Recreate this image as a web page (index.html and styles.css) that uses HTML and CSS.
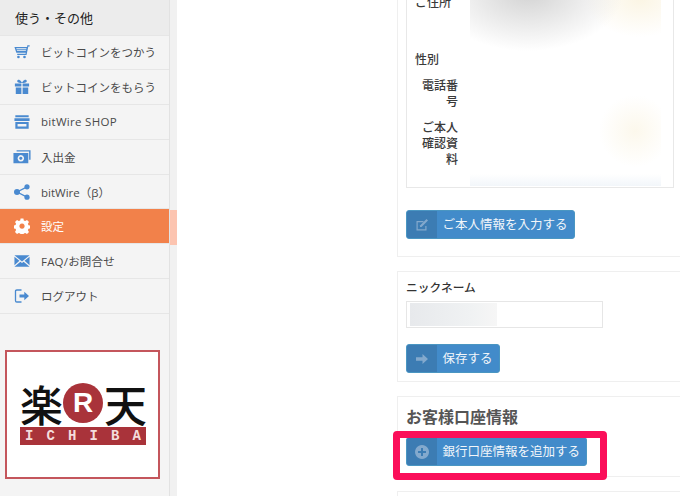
FILE: index.html
```html
<!DOCTYPE html>
<html lang="ja">
<head>
<meta charset="utf-8">
<title>設定</title>
<link rel="stylesheet" href="styles.css">
</head>
<body>
<div class="page">
  <aside class="sidebar">
    <div class="side-head">使う・その他</div>
    <nav class="nav">
      <a class="nav-item"><svg class="ico" viewBox="0 0 18 16"><path d="M15 0.500h2.600v1.400h-1.500l-2 9.400H3.600v-1.300h9.400l.2-1.100H2.600L0.500 2.500h14.200zM2.600 3.800l.2 1h11l.2-1zM3.200 5.900l.2 1h9.900l.2-1z" fill-rule="evenodd"/><circle cx="5" cy="13.600" r="1.500"/><circle cx="11.800" cy="13.600" r="1.500"/></svg><span>ビットコインをつかう</span></a>
      <a class="nav-item"><svg class="ico" viewBox="0 0 18 18"><path d="M1 5h7.300v3.400H1zM9.700 5H17v3.400H9.700zM2 9.600h6.300V17H2zM9.700 9.600H16V17H9.700z"/><path d="M9 4.600C7 4.600 4 4.400 3.600 2.800 3.300 1.200 5 .6 6.200 1.100 7.600 1.700 8.400 3 9 4.200 9.600 3 10.400 1.700 11.800 1.100 13 .6 14.700 1.200 14.400 2.800 14 4.400 11 4.600 9 4.600z"/></svg><span>ビットコインをもらう</span></a>
      <a class="nav-item nav-latin"><svg class="ico" viewBox="0 0 18 16"><path d="M1.500 0.500h15v2.200h-15zM0.500 3.800h17v3.200h-17zM1.500 8h15v7.500h-15zM4 10.200v3h10v-3z" fill-rule="evenodd"/></svg><span>bitWire SHOP</span></a>
      <a class="nav-item"><svg class="ico ico-wide" viewBox="0 0 20 16"><path d="M4 0.500h15.500v10.500h-1.600V2H4z"/><path d="M0.500 3.500h16.500v11.500H0.500zM8.700 5.800a3.600 3.600 0 1 0 .01 0zM8.700 7.600a1.800 1.800 0 1 1-.01 0z" fill-rule="evenodd"/></svg><span>入出金</span></a>
      <a class="nav-item"><svg class="ico" viewBox="0 0 16 16"><circle cx="3" cy="8" r="3"/><circle cx="13" cy="2.800" r="2.600"/><circle cx="13" cy="13.200" r="2.600"/><path d="M3 8 13 2.800M3 8l10 5.200" stroke="#4a8ad0" stroke-width="1.400" fill="none"/></svg><span>bitWire（β）</span></a>
      <a class="nav-item nav-active"><svg class="ico" viewBox="0 0 16 16"><path d="M6.600 0.500h2.800l.4 2 1.400.6 1.800-1.100 2 2-1.100 1.800.6 1.400 2 .4v2.800l-2 .4-.6 1.400 1.100 1.800-2 2-1.800-1.100-1.400.6-.4 2H6.600l-.4-2-1.400-.6L3 15.900l-2-2 1.100-1.800-.6-1.400-2-.4V7.500l2-.4.6-1.400L1 3.900l2-2 1.800 1.100 1.400-.6zM8 5.500a2.600 2.600 0 1 0 .01 0z" fill-rule="evenodd"/></svg><span>設定</span></a>
      <a class="nav-item nav-latin-s"><svg class="ico" viewBox="0 0 18 14"><path d="M0.500 0.500h17l-8.500 7zM0.500 2.200v9.600l5.600-5zM17.500 2.200v9.600l-5.600-5zM0.500 13.500l6.700-5.700L9 9.300l1.800-1.500 6.700 5.700z"/></svg><span>FAQ/お問合せ</span></a>
      <a class="nav-item"><svg class="ico" viewBox="0 0 16 16"><path d="M7.500 2H2.800C2 2 1.500 2.500 1.500 3.200v9.600c0 .7.5 1.200 1.300 1.200h4.700" fill="none" stroke="#4a8ad0" stroke-width="1.300"/><path d="M5.500 6.500h4.800V3.800L15 8l-4.700 4.200V9.500H5.500z"/></svg><span>ログアウト</span></a>
    </nav>
    <div class="ad">
      <div class="ad-mark"><span class="ad-kanji">楽</span><span class="ad-r">R</span><span class="ad-kanji">天</span></div>
      <div class="ad-band"><span>I</span><span>C</span><span>H</span><span>I</span><span>B</span><span>A</span></div>
    </div>
  </aside>
  <div class="rail"><div class="rail-mark"></div></div>
  <main class="main">
    <section class="panel panel-first">
      <div class="profile">
        <div class="labels">
          <div class="lab lab-addr lab-left">ご住所</div>
          <div class="lab lab-left">性別</div>
          <div class="lab">電話番<br>号</div>
          <div class="lab">ご本人<br>確認資<br>料</div>
        </div>
        <div class="blur"></div>
      </div>
      <button class="btn btn-profile"><span class="btn-ico"><svg viewBox="0 0 14 14"><path d="M1.500 3h7v1.200H2.700v7.100h7.600V8h1.200v4.500h-10z"/><path d="M5 7.500 11.500 1l1.500 1.500L6.500 9H5z"/></svg></span><span class="btn-txt">ご本人情報を入力する</span></button>
    </section>
    <section class="panel panel-nick">
      <div class="nick-label">ニックネーム</div>
      <div class="nick-input"><div class="nick-blur"></div></div>
      <button class="btn"><span class="btn-ico"><svg viewBox="0 0 14 14"><path d="M1 5.300h6.500V2L13 7l-5.500 5V8.700H1z"/></svg></span><span class="btn-txt">保存する</span></button>
    </section>
    <section class="panel panel-bank">
      <h2 class="bank-title">お客様口座情報</h2>
      <button class="btn"><span class="btn-ico"><svg viewBox="0 0 14 14"><path fill-rule="evenodd" d="M7 0a7 7 0 1 0 .01 0zM6 3h2v3h3v2H8v3H6V8H3V6h3z"/></svg></span><span class="btn-txt">銀行口座情報を追加する</span></button>
      <div class="highlight"></div>
    </section>
    <section class="panel panel-next"></section>
  </main>
</div>
</body>
</html>
```

FILE: styles.css
```css
* { box-sizing: border-box; }
html, body { margin: 0; height: 496px; overflow: hidden; background: #fff; }
body { font-family: "Open Sans", "Noto Sans CJK JP", sans-serif; color: #444; }
.page { display: flex; height: 496px; overflow: hidden; }

.sidebar { width: 169px; flex: none; background: #f4f4f4; }
.side-head { height: 35.5px; background: #ececec; border-bottom: 1px solid #e6e6e6; padding: 10px 0 0 15px; font-size: 13px; line-height: 17px; color: #222; }
.nav-item { height: 34.8px; display: flex; align-items: center; padding-left: 14px; border-bottom: 1.5px solid #e6e6e6; font-size: 11.5px; color: #4a4a4a; }
.nav-item span { margin-left: 11px; }
.nav-latin { letter-spacing: 0.3px; }
.nav-latin-s { letter-spacing: 0.2px; }
.ico { width: 16px; height: 16px; flex: none; fill: #4a8ad0; }
.ico-wide { margin-left: -1px; width: 18px; margin-right: -1px; }
.nav-active { background: #f2814a; color: #fff; }
.nav-active .ico { fill: #fff; }

.ad { width: 155px; height: 129px; margin: 36px 0 0 5px; background: #fff; border: 2px solid #c4565c; padding: 29px 0 0 13px; }
.ad-mark { display: flex; align-items: center; width: 126px; height: 44px; justify-content: space-between; }
.ad-kanji { width: 42px; font: 500 43px/44px "Noto Sans CJK JP", sans-serif; color: #111; }
.ad-r { width: 40px; height: 40px; flex: none; border-radius: 50%; background: #a9333a; color: #fff; font: 700 28px/40px "Liberation Sans", sans-serif; text-align: center; }
.ad-band { width: 126px; height: 18px; margin-top: 2px; background: #a9333a; color: #f4dcdc; display: flex; justify-content: space-between; padding: 0 5px; font: 700 14px/18px "Liberation Mono", monospace; }

.rail { width: 8px; flex: none; background: #f1f1f1; border-left: 1.5px solid #e2e2e2; position: relative; }
.rail-mark { position: absolute; left: 0; top: 210px; width: 7px; height: 35px; background: #fcc4b0; }

.main { flex: 1; min-width: 0; padding-left: 220px; }
.panel { width: 300px; border: 1.5px solid #efefef; padding: 0 0 0 8px; position: relative; }
.panel-first { margin-top: -20px; height: 277px; border-top: 0; }
.profile { display: flex; width: 268px; height: 208px; border: 1.5px solid #e8e8e8; background: #fff; }
.labels { width: 43px; margin-left: 8px; flex: none; padding-top: 13.5px; }
.lab { font-size: 12px; line-height: 16px; text-align: right; margin-bottom: 10px; color: #3a3a3a; font-weight: 500; }
.lab-left { text-align: left; }
.lab-addr { margin-bottom: 41px; }
.blur { width: 191px; margin: 0 0 0 12px; height: 205px; background:
  radial-gradient(ellipse 95px 58px at 58px 12px, #d3d3d3, rgba(211,211,211,0) 100%),
  radial-gradient(ellipse 55px 38px at 170px 18px, #fbf5e4, rgba(251,245,228,0) 100%),
  radial-gradient(ellipse 36px 36px at 165px 150px, #fcf8ec, rgba(252,248,236,0) 100%),
  linear-gradient(0deg, #f2f6fa, #fff 12px),
  linear-gradient(90deg, #ededed, #fff 14px); }

.btn { display: flex; align-items: stretch; height: 29px; padding: 0; border: 1px solid #4a96c2; border-radius: 3px; background: #428bca; color: #f2f6fa; font: 12.5px/27px "Open Sans", "Noto Sans CJK JP", sans-serif; overflow: hidden; }
.btn-ico { width: 30px; flex: none; background: #3c7cb3; display: flex; align-items: center; justify-content: center; }
.btn-ico svg { width: 14px; height: 14px; fill: #83a9cd; }
.btn-txt { padding: 0 6px 0 5.5px; white-space: nowrap; }
.btn-profile { margin-top: 22px; }

.panel-nick { height: 111px; margin-top: 14px; padding-top: 7px; }
.nick-label { font-size: 11.7px; line-height: 16px; font-weight: 500; color: #333; }
.nick-input { width: 197px; height: 27px; margin-top: 6px; border: 1.5px solid #e6e6e6; padding: 1px 0 0 3px; margin-bottom: 16px; }
.nick-blur { width: 87px; height: 23px; background: linear-gradient(90deg, #e7e9ec, #f0f2f3 70%, #f6f6f6); }

.panel-bank { height: 81px; margin-top: 14px; padding-top: 10px; }
.bank-title { margin: 0 0 10px; font-size: 16px; line-height: 20px; font-weight: 700; color: #555; }
.highlight { position: absolute; left: -5px; top: 34px; width: 214px; height: 49px; border: 7px solid #fb0f5a; border-radius: 4px; }
.panel-next { height: 40px; margin-top: 14px; }
```
